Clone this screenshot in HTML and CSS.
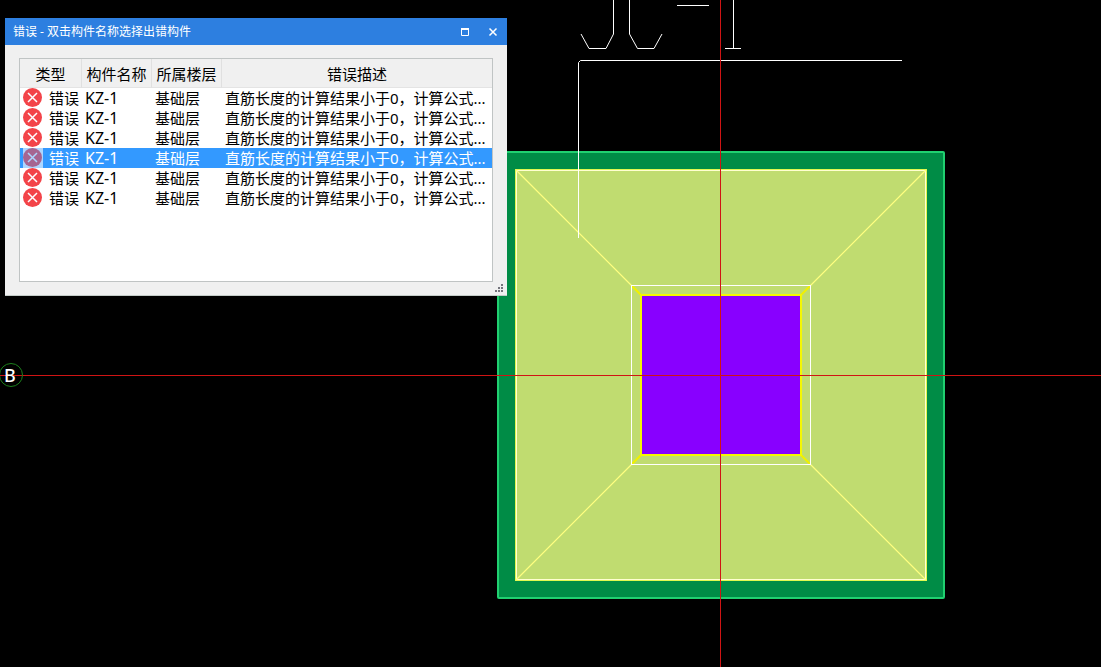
FILE: index.html
```html
<!DOCTYPE html>
<html lang="zh-CN">
<head>
<meta charset="utf-8">
<title>错误 - 双击构件名称选择出错构件</title>
<link rel="stylesheet" href="styles.css">
</head>
<body>
<svg class="drawing" aria-hidden="true">
  <rect class="cushion" x="498" y="152" width="446" height="446" rx="1"/>
  <rect class="footing" x="516" y="170" width="410" height="410"/>
  <rect class="footing-edge" x="516.5" y="170.5" width="409" height="409"/>
  <path class="slope" d="M516 170L632 286M926 170L810 286M516 580L632 464M926 580L810 464"/>
  <path class="slope-inner" d="M632 286l9 9M810 286l-9 9M632 464l9-9M810 464l-9-9"/>
  <rect class="line" x="631.5" y="285.5" width="179" height="179"/>
  <rect class="column" x="641" y="295" width="160" height="160"/>
  <path class="line" d="M578.5 238V62.500L580.500 60.500H902M677 5.500H709M733.500 0V48M725 48.500H741"/>
  <path class="line" d="M613.500 0V34L606 48.500H589L581 34M629.500 0V34L637.500 48.500H654L662 34"/>
  <path class="axis" d="M720.5 0V4000M0 375.5H4000"/>
  <circle class="bubble" cx="11" cy="375" r="11.5"/>
  <text class="axis-name" x="10" y="382">B</text>
</svg>

<svg class="symbols" aria-hidden="true">
  <symbol id="error" viewBox="0 0 20 20">
    <circle cx="9.500" cy="9.500" r="9.500" fill="#f34449"/>
    <path d="M5 5l9 9M14 5l-9 9" fill="none" stroke="#fff" stroke-width="1.500"/>
  </symbol>
</svg>

<section class="dialog" role="dialog" aria-labelledby="dialog-title">
  <header class="titlebar">
    <h1 class="title" id="dialog-title">错误 - 双击构件名称选择出错构件</h1>
    <button class="window-button" type="button" aria-label="最大化">
      <svg width="10" height="10" viewBox="0 0 10 10"><path d="M1.500 2V8.500H8.500V2M1 2.500H9M1 1.500H9" fill="none" stroke="#fff"/></svg>
    </button>
    <button class="window-button" type="button" aria-label="关闭">
      <svg width="10" height="10" viewBox="0 0 10 10"><path d="M1.500 1.500l7 7M8.500 1.500l-7 7" fill="none" stroke="#fff" stroke-width="1.500"/></svg>
    </button>
  </header>
  <div class="content">
    <div class="list">
      <table class="errors">
        <colgroup><col class="col-type"><col class="col-name"><col class="col-name"><col></colgroup>
        <thead>
          <tr><th>类型</th><th>构件名称</th><th>所属楼层</th><th>错误描述</th></tr>
        </thead>
        <tbody>
          <tr><td><span class="kind"><svg class="icon"><use href="#error"/></svg>错误</span></td><td class="name">KZ-1</td><td>基础层</td><td>直筋长度的计算结果小于0，计算公式...</td></tr>
          <tr><td><span class="kind"><svg class="icon"><use href="#error"/></svg>错误</span></td><td class="name">KZ-1</td><td>基础层</td><td>直筋长度的计算结果小于0，计算公式...</td></tr>
          <tr><td><span class="kind"><svg class="icon"><use href="#error"/></svg>错误</span></td><td class="name">KZ-1</td><td>基础层</td><td>直筋长度的计算结果小于0，计算公式...</td></tr>
          <tr class="selected"><td><span class="kind"><svg class="icon"><use href="#error"/></svg>错误</span></td><td class="name">KZ-1</td><td>基础层</td><td>直筋长度的计算结果小于0，计算公式...</td></tr>
          <tr><td><span class="kind"><svg class="icon"><use href="#error"/></svg>错误</span></td><td class="name">KZ-1</td><td>基础层</td><td>直筋长度的计算结果小于0，计算公式...</td></tr>
          <tr><td><span class="kind"><svg class="icon"><use href="#error"/></svg>错误</span></td><td class="name">KZ-1</td><td>基础层</td><td>直筋长度的计算结果小于0，计算公式...</td></tr>
        </tbody>
      </table>
    </div>
  </div>
  <svg class="grip" width="8" height="8" viewBox="0 0 8 8" aria-hidden="true"><path d="M6 0h2v2H6zM3 3h2v2H3zM6 3h2v2H6zM0 6h2v2H0zM3 6h2v2H3zM6 6h2v2H6z" fill="#74747c"/></svg>
</section>
</body>
</html>
```
FILE: styles.css
```css
* {
  box-sizing: border-box;
}

body {
  margin: 0;
  min-height: 100vh;
  overflow: hidden;
  background: #000;
  color: #000;
  font-family: "Noto Sans", "Noto Sans CJK SC", sans-serif;
  font-size: 15px;
}

.drawing {
  position: absolute;
  inset: 0;
  width: 100%;
  height: 100%;
}

.cushion {
  fill: #008c46;
  stroke: #20d070;
  stroke-width: 2;
}

.footing {
  fill: #c0dc70;
  stroke: #e0f850;
  stroke-width: 2;
}

.footing-edge {
  fill: none;
  stroke: #ffffd0;
}

.slope {
  fill: none;
  stroke: #ffff80;
  stroke-width: 1.2;
}

.slope-inner {
  fill: none;
  stroke: #f0f000;
  stroke-width: 2;
}

.column {
  fill: #8800ff;
  stroke: #f4f800;
  stroke-width: 2;
}

.line {
  fill: none;
  stroke: #fff;
}

.axis {
  fill: none;
  stroke: #d01414;
}

.bubble {
  fill: none;
  stroke: #1c801c;
}

.axis-name {
  fill: #fff;
  font-size: 18px;
  font-weight: 500;
  text-anchor: middle;
}

.symbols {
  position: absolute;
  width: 0;
  height: 0;
}

.dialog {
  position: absolute;
  top: 18px;
  left: 5px;
  width: 502px;
  background: #f0f0f0;
  border-bottom: 1px solid #c4ccc8;
}

.titlebar {
  display: flex;
  align-items: center;
  height: 27px;
  padding: 0 4px 0 8px;
  background: #2d7fe0;
}

.title {
  flex: 1;
  margin: 0;
  color: #fff;
  font-size: 12px;
  font-weight: 400;
  line-height: 20px;
}

.window-button {
  display: flex;
  align-items: center;
  justify-content: center;
  width: 20px;
  height: 20px;
  margin-left: 8px;
  padding: 0;
  border: 0;
  background: none;
}

.content {
  padding: 13px 14px;
}

.list {
  min-height: 224px;
  border: 1px solid #c0c4c4;
  background: #fff;
}

.errors {
  width: 100%;
  table-layout: fixed;
  border-collapse: separate;
  border-spacing: 0;
}

.col-type {
  width: 62px;
}

.col-name {
  width: 70px;
}

.errors th {
  height: 29px;
  padding: 2px 0 0;
  border-right: 1px solid #e0e0e0;
  border-bottom: 1px solid #e4e4e4;
  background: #f0f0f0;
  font-weight: 400;
  line-height: 20px;
  white-space: nowrap;
}

.errors th:last-child {
  border-right: 0;
}

.errors td {
  height: 20px;
  padding: 0 3px;
  line-height: 20px;
  white-space: nowrap;
  overflow: hidden;
}

.errors .name {
  font-size: 16px;
}

.kind {
  display: flex;
  gap: 6px;
  height: 20px;
}

.icon {
  flex: none;
  width: 20px;
  height: 20px;
}

.selected {
  background: #3399ff;
  color: #fff;
}

.selected .icon {
  background: #fff;
  opacity: 0.6;
}

.grip {
  position: absolute;
  right: 4px;
  bottom: 3px;
}
```
